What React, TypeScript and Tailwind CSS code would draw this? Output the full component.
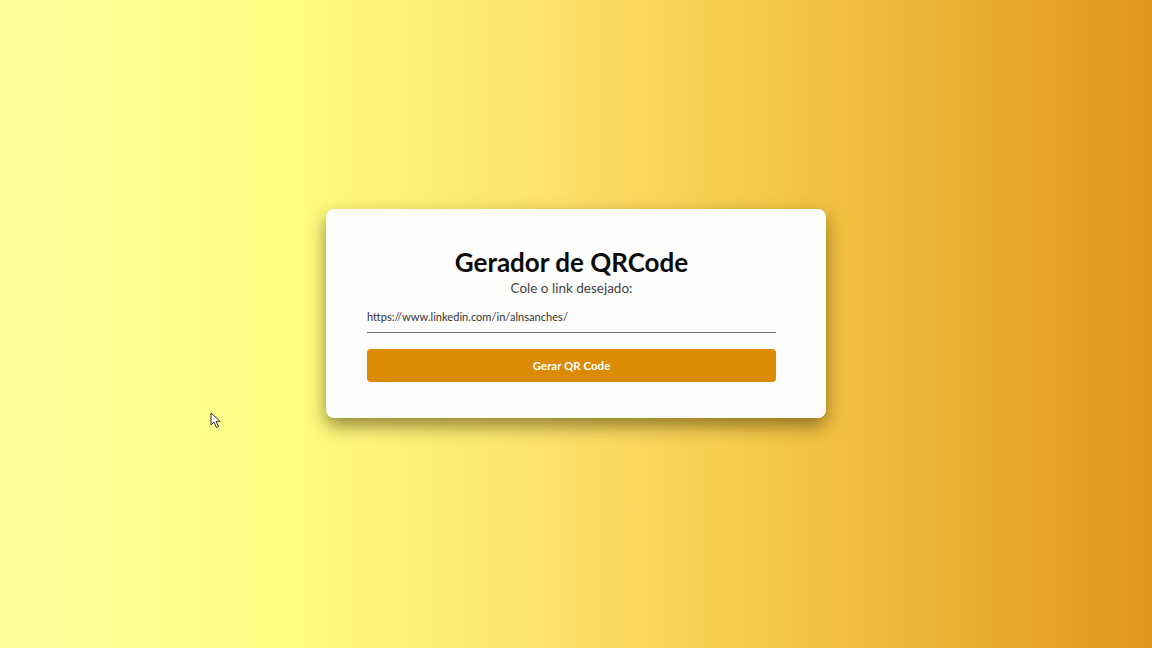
import React from "react";

export default function App() {
  return (
    <div
      className="relative w-full h-[648px] overflow-hidden flex items-center justify-center bg-[linear-gradient(to_right,#fdfd9c_0%,#ffff84_24%,#fde16a_48%,#f3c443_70%,#e9a82a_88%,#df9719_100%)]"
      style={{ fontFamily: "Lato, 'Noto Sans', sans-serif" }}
    >
      <div className="mb-[22px] w-[500px] h-[209px] bg-[#fdfdfc] rounded-[8px] shadow-[0_8px_18px_rgba(60,45,0,0.55)] pl-[41px] pr-[50px] pt-[37px] flex flex-col">
        <h1 className="text-center text-[26px] leading-[32px] font-bold text-[#0a0a0a]">Gerador de QRCode</h1>
        <p className="mt-[1px] text-center text-[13.5px] leading-[18px] text-[#444]">Cole o link desejado:</p>
        <div className="mt-[12px] border-b border-[#777] pb-[7px] text-[11.1px] leading-[16px] text-[#333]">
          https://www.linkedin.com/in/alnsanches/
        </div>
        <button className="mt-[16px] h-[33px] pt-[2px] rounded-[4px] bg-[#db8b04] text-white text-[11.5px] font-bold">
          Gerar QR Code
        </button>
      </div>
      <svg className="absolute left-[210px] top-[412px]" width="12" height="17" viewBox="0 0 12 17">
        <path d="M1 1 L1 13 L4 10 L6.5 15.5 L8.5 14.6 L6 9.3 L10.2 9.3 Z" fill="#fff" stroke="#333" strokeWidth="1" strokeLinejoin="round" />
      </svg>
    </div>
  );
}
